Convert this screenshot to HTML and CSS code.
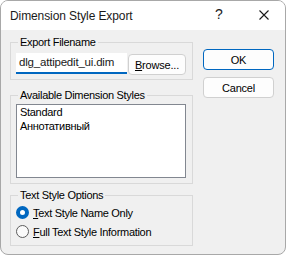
FILE: index.html
```html
<!DOCTYPE html>
<html lang="en">
<head>
  <meta charset="UTF-8">
  <title>Dimension Style Export</title>
  <link rel="stylesheet" href="styles.css">
</head>
<body>

  <div class="dialog">
    <div class="titlebar">
      <span class="title">Dimension Style Export</span>
      <span class="help">?</span>
      <svg class="close" width="10" height="10" viewBox="0 0 10 10">
        <path d="M0.5 0.5 L9.5 9.5 M9.5 0.5 L0.5 9.5" stroke="#1a1a1a" stroke-width="1.1" fill="none"/>
      </svg>
    </div>

    <div class="content">
      <div class="left">
        <fieldset class="group export">
          <legend>Export Filename</legend>
          <div class="file-row">
            <div class="filename">dlg_attipedit_ui.dim</div>
            <button class="btn browse"><u>B</u>rowse...</button>
          </div>
        </fieldset>

        <fieldset class="group styles">
          <legend>Available Dimension Styles</legend>
          <div class="listbox">
            <div>Standard</div>
            <div>Аннотативный</div>
          </div>
        </fieldset>

        <fieldset class="group options">
          <legend>Text Style Options</legend>
          <label class="radio"><span class="dot on"></span><span><u>T</u>ext Style Name Only</span></label>
          <label class="radio"><span class="dot"></span><span><u>F</u>ull Text Style Information</span></label>
        </fieldset>
      </div>

      <div class="right">
        <button class="btn default">OK</button>
        <button class="btn">Cancel</button>
      </div>
    </div>
  </div>

</body>
</html>
```

FILE: styles.css
```css
body {
  margin: 0;
  background-color: #fff;
  font-family: "Liberation Sans", Arial, sans-serif;
  font-size: 11px;
  letter-spacing: -0.3px;
  color: #000;
}
.dialog {
  width: 286px;
  height: 255px;
  box-sizing: border-box;
  border: 1px solid #a8a8a8;
  border-radius: 8px;
  background-color: #f0f0f0;
  overflow: hidden;
  display: flex;
  flex-direction: column;
}
.titlebar {
  height: 29px;
  background-color: #fff;
  display: flex;
  align-items: center;
  position: relative;
  letter-spacing: 0;
}
.title {
  font-size: 12px;
  letter-spacing: -0.1px;
  margin-left: 9px;
  margin-top: 1px;
  color: #1a1a1a;
}
.help {
  position: absolute;
  left: 214px;
  top: 5px;
  font-size: 14px;
  color: #1a1a1a;
}
.close {
  position: absolute;
  left: 258px;
  top: 9px;
}
.content {
  display: flex;
  padding: 6px 0 0 9px;
}
.left {
  width: 183px;
  display: flex;
  flex-direction: column;
}
.group {
  margin: 0;
  border: 1px solid #d9d9d9;
  padding: 0 6px 0 5px;
  min-width: 0;
}
.group legend {
  padding: 0 2px;
  margin-left: 2px;
  line-height: 13px;
  color: #000;
}
.export {
  padding-top: 4px;
  padding-bottom: 4px;
}
.file-row {
  display: flex;
  align-items: flex-start;
  gap: 1px;
}
.filename {
  width: 111px;
  height: 21px;
  box-sizing: border-box;
  background-color: #fff;
  border-bottom: 2px solid #0067c0;
  font-size: 11.5px;
  letter-spacing: -0.2px;
  line-height: 19px;
  padding-left: 3px;
  color: #1a1a1a;
  white-space: nowrap;
  overflow: hidden;
}
.btn {
  font-family: "Liberation Sans", Arial, sans-serif;
  font-size: 11px;
  letter-spacing: -0.2px;
  background-color: #fdfdfd;
  border: 1px solid #d0d0d0;
  border-radius: 4px;
  color: #000;
  padding: 0;
  height: 21px;
}
.browse {
  width: 58px;
  margin-top: 1px;
}
.styles {
  margin-top: 9px;
  padding-top: 2px;
  padding-bottom: 5px;
}
.listbox {
  height: 74px;
  box-sizing: border-box;
  width: 170px;
  background-color: #fff;
  border: 1px solid #828790;
  padding: 0 3px;
  line-height: 14px;
}
.options {
  margin-top: 5px;
  padding-top: 1px;
  padding-bottom: 4px;
  padding-left: 5px;
}
.radio {
  display: flex;
  align-items: center;
  gap: 4px;
  height: 19px;
}
.dot {
  width: 13px;
  height: 13px;
  box-sizing: border-box;
  border-radius: 50%;
  border: 1px solid #5c5c5c;
  background-color: #fafafa;
}
.dot.on {
  border: 4px solid #0067c0;
  background-color: #fff;
}
.right {
  width: 71px;
  margin-left: 10px;
  padding-top: 13px;
  display: flex;
  flex-direction: column;
  gap: 7px;
}
.right .btn {
  height: 21px;
}
.default {
  border-color: #0067c0;
}
```
